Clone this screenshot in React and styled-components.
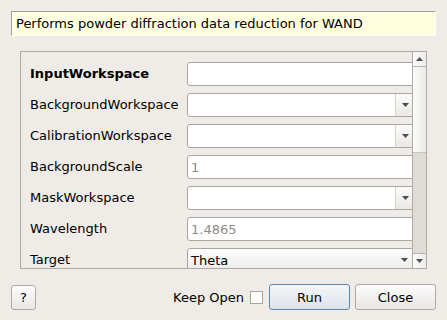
import React from "react";
import styled, { createGlobalStyle } from "styled-components";

const Global = createGlobalStyle`
  html, body { margin: 0; padding: 0; background: #efebe7; }
  body { font-family: "DejaVu Sans", "Liberation Sans", sans-serif; font-size: 13px; color: #000; }
  * { box-sizing: border-box; }
`;

const Dialog = styled.div`
  width: 447px;
  height: 320px;
  background: #efebe7;
  display: flex;
  flex-direction: column;
  padding: 11px 11px 0 11px;
  overflow: hidden;
`;

const Description = styled.div`
  height: 25px;
  background: #ffffe0;
  border-top: 1px solid #a09e9b;
  border-left: 1px solid #a09e9b;
  border-right: 1px solid #ffffff;
  border-bottom: 1px solid #ffffff;
  display: flex;
  align-items: center;
  padding-left: 4px;
  white-space: nowrap;
`;

const ScrollArea = styled.div`
  margin: 15px 9px 0 9px;
  height: 218px;
  border: 1px solid #aeaba7;
  display: flex;
`;

const Viewport = styled.div`
  flex: 1;
  overflow: hidden;
  position: relative;
`;

const Form = styled.div`
  display: grid;
  grid-template-columns: 151px 228px;
  grid-auto-rows: 24px;
  row-gap: 7px;
  column-gap: 6px;
  padding: 10px 0 0 9px;
  width: 420px;
`;

const Label = styled.div`
  display: flex;
  align-items: center;
  padding-bottom: 1px;
  font-weight: ${(p) => (p.$bold ? "bold" : "normal")};
  white-space: nowrap;
`;

const Field = styled.div`
  height: 24px;
  border: 1px solid #aaa7a3;
  border-radius: 3px;
  background: ${(p) =>
    p.$button ? "linear-gradient(#fdfdfd, #ecebe9)" : "#ffffff"};
  display: flex;
  align-items: center;
  color: ${(p) => (p.$muted ? "#8c8c8c" : "#000")};
  padding-left: ${(p) => (p.$button ? "3px" : "3px")};
  overflow: hidden;
`;

const FieldText = styled.span`
  flex: 1;
  white-space: nowrap;
`;

const ArrowBox = styled.div`
  width: 19px;
  align-self: stretch;
  display: flex;
  align-items: center;
  justify-content: flex-start;
  padding-left: 6px;
  border-left: ${(p) => (p.$sep ? "1px solid #d6d3cf" : "none")};
  background: ${(p) => (p.$sep ? "linear-gradient(#fbfbfa, #ebe9e6)" : "transparent")};
`;

const Scrollbar = styled.div`
  width: 14px;
  border-left: 1px solid #aeaba7;
  display: flex;
  flex-direction: column;
  background: #dfdcd8;
`;

const ScrollBtn = styled.div`
  height: 15px;
  background: linear-gradient(90deg, #fbfbfa, #ecebe9);
  display: flex;
  align-items: center;
  justify-content: center;
  border-top: ${(p) => (p.$down ? "1px solid #b9b6b2" : "none")};
  border-bottom: ${(p) => (p.$down ? "none" : "1px solid #b9b6b2")};
`;

const Slider = styled.div`
  height: 86px;
  background: linear-gradient(90deg, #fdfdfd, #ebe9e6);
  border-bottom: 1px solid #c9c6c2;
`;

const Track = styled.div`
  flex: 1;
`;

const ButtonBar = styled.div`
  margin-top: 15px;
  display: flex;
  align-items: center;
  height: 26px;
`;

const Button = styled.button`
  font-family: inherit;
  font-size: 13px;
  color: #000;
  height: ${(p) => p.$h || 25}px;
  width: ${(p) => p.$w}px;
  margin-left: ${(p) => p.$ml || 0}px;
  border: 1px solid ${(p) => (p.$primary ? "#5f86ad" : "#aeaba7")};
  border-radius: 3px;
  background: ${(p) =>
    p.$primary
      ? "linear-gradient(#f4f6f8, #dde3e9)"
      : "linear-gradient(#fcfcfc, #e9e7e4)"};
  padding: 0;
  display: flex;
  align-items: center;
  justify-content: center;
`;

const Spacer = styled.div`
  flex: 1;
`;

const KeepLabel = styled.span`
  margin-right: 6px;
  white-space: nowrap;
`;

const Check = styled.div`
  width: 13px;
  height: 13px;
  border: 1px solid #a8a5a1;
  background: #fff;
  margin-right: 6px;
`;

const Down = ({ color = "#4d4d4d" }) => (
  <svg width="7" height="4" viewBox="0 0 7 4">
    <polygon points="0,0 7,0 3.5,4" fill={color} />
  </svg>
);

const Up = () => (
  <svg width="7" height="4" viewBox="0 0 7 4">
    <polygon points="0,4 7,4 3.5,0" fill="#4d4d4d" />
  </svg>
);

const rows = [
  { label: "InputWorkspace", bold: true, kind: "text" },
  { label: "BackgroundWorkspace", kind: "combo" },
  { label: "CalibrationWorkspace", kind: "combo" },
  { label: "BackgroundScale", kind: "text", value: "1", muted: true },
  { label: "MaskWorkspace", kind: "combo" },
  { label: "Wavelength", kind: "text", value: "1.4865", muted: true },
  { label: "Target", kind: "select", value: "Theta" },
];

export default function App() {
  return (
    <>
      <Global />
      <Dialog>
        <Description>Performs powder diffraction data reduction for WAND</Description>
        <ScrollArea>
          <Viewport>
            <Form>
              {rows.map((r) => (
                <React.Fragment key={r.label}>
                  <Label $bold={r.bold}>{r.label}</Label>
                  <Field $muted={r.muted} $button={r.kind === "select"}>
                    <FieldText>{r.value || ""}</FieldText>
                    {r.kind === "combo" && (
                      <ArrowBox $sep>
                        <Down />
                      </ArrowBox>
                    )}
                    {r.kind === "select" && (
                      <ArrowBox>
                        <Down />
                      </ArrowBox>
                    )}
                  </Field>
                </React.Fragment>
              ))}
            </Form>
          </Viewport>
          <Scrollbar>
            <ScrollBtn>
              <Up />
            </ScrollBtn>
            <Slider />
            <Track />
            <ScrollBtn $down>
              <Down />
            </ScrollBtn>
          </Scrollbar>
        </ScrollArea>
        <ButtonBar>
          <Button $w={25}>?</Button>
          <Spacer />
          <KeepLabel>Keep Open</KeepLabel>
          <Check />
          <Button $w={81} $h={26} $primary>
            Run
          </Button>
          <Button $w={81} $h={26} $ml={5}>
            Close
          </Button>
        </ButtonBar>
      </Dialog>
    </>
  );
}
